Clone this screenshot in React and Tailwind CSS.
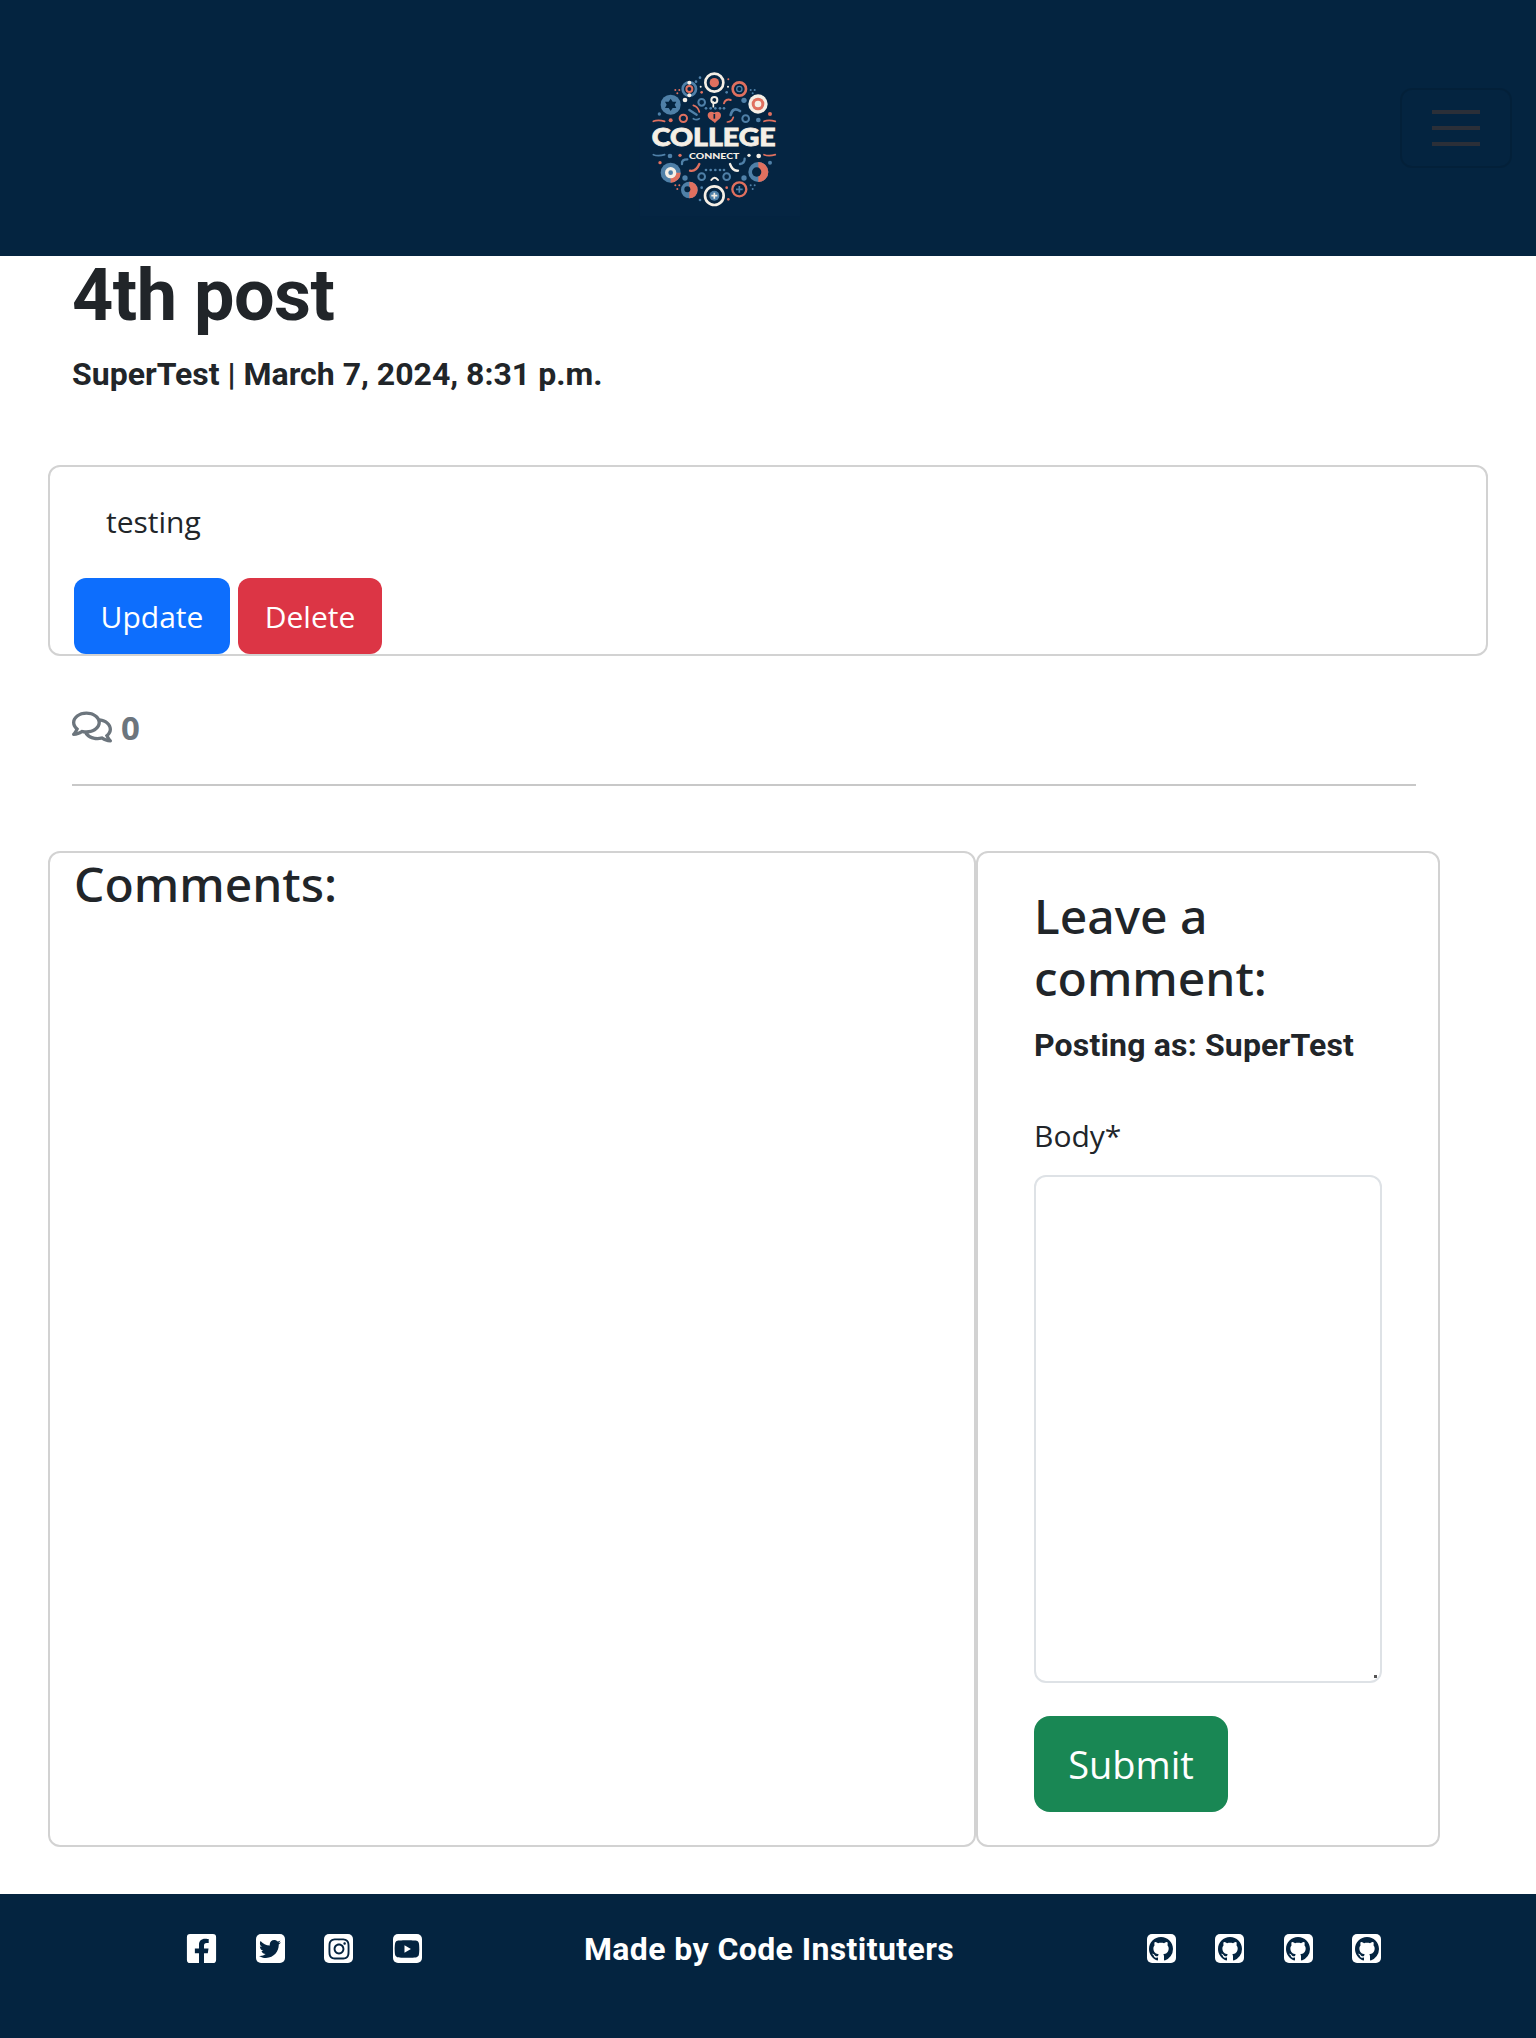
import { FaRegComments, FaFacebookSquare, FaTwitter, FaInstagram, FaYoutube } from 'react-icons/fa';

const GITHUB_PATH = 'M8 0C3.58 0 0 3.58 0 8c0 3.54 2.29 6.53 5.47 7.59.4.07.55-.17.55-.38 0-.19-.01-.82-.01-1.49-2.01.37-2.53-.49-2.69-.94-.09-.23-.48-.94-.82-1.13-.28-.15-.68-.52-.01-.53.63-.01 1.08.58 1.23.82.72 1.21 1.87.87 2.33.66.07-.52.28-.87.51-1.07-1.78-.2-3.64-.89-3.64-3.95 0-.87.31-1.59.82-2.15-.08-.2-.36-1.02.08-2.12 0 0 .67-.21 2.2.82.64-.18 1.32-.27 2-.27.68 0 1.36.09 2 .27 1.53-1.04 2.2-.82 2.2-.82.44 1.1.16 1.92.08 2.12.51.56.82 1.27.82 2.15 0 3.07-1.87 3.75-3.65 3.95.29.25.54.73.54 1.48 0 1.07-.01 1.93-.01 2.2 0 .21.15.46.55.38A8.013 8.013 0 0016 8c0-4.42-3.58-8-8-8z';

const headingFont = "font-['Roboto',sans-serif]";

const INK = '#f5efe6';
const BLUE = '#4f80a8';
const RED = '#e0705f';
const NAVY = '#042440';

// dots: [x, y, r, fill]
const LOGO_DOTS = [
  [268, 128, 6, INK], [268, 166, 6, INK], [255, 180, 7, INK], [432, 181, 8, BLUE], [305, 157, 4, RED], [380, 157, 4, BLUE],
  [300, 113, 4, BLUE], [288, 125, 4, BLUE], [385, 118, 3, RED], [302, 140, 3, INK], [384, 140, 3, INK],
  [226, 150, 3, RED], [238, 150, 3, RED], [232, 160, 3, RED], [452, 150, 3, BLUE], [464, 150, 3, BLUE], [458, 160, 3, BLUE],
  [212, 241, 6, RED], [475, 240, 7, BLUE], [178, 222, 5, BLUE], [510, 222, 6, RED],
  [318, 205, 4, BLUE], [332, 205, 4, BLUE], [346, 205, 4, BLUE], [360, 205, 4, BLUE], [372, 205, 4, BLUE],
  [210, 348, 7, BLUE], [240, 346, 5, RED], [447, 346, 5, INK], [476, 348, 7, INK], [180, 368, 5, RED], [510, 368, 6, BLUE],
  [318, 390, 4, BLUE], [332, 390, 4, BLUE], [346, 390, 4, BLUE], [360, 390, 4, BLUE], [372, 390, 4, BLUE],
  [255, 414, 8, BLUE], [432, 414, 8, BLUE], [226, 436, 3, RED], [238, 436, 3, RED], [232, 447, 3, RED],
  [452, 436, 3, BLUE], [464, 436, 3, BLUE], [458, 447, 3, BLUE], [305, 443, 4, BLUE], [380, 443, 4, RED], [385, 478, 4, RED], [300, 480, 4, BLUE],
];

// rings: [x, y, r, strokeWidth, stroke]
const LOGO_RINGS = [
  [343, 128, 27, 8, INK], [268, 147, 20, 8, BLUE], [268, 147, 9, 6, RED], [418, 147, 20, 8, RED], [418, 147, 8, 4, BLUE],
  [305, 187, 10, 6, BLUE], [343, 180, 9, 6, INK], [250, 235, 11, 6, RED], [437, 236, 10, 6, BLUE],
  [305, 410, 10, 6, BLUE], [380, 410, 10, 6, BLUE], [343, 467, 28, 8, INK], [418, 448, 21, 7, RED],
];

// arcs drawn as short thick strokes
const LOGO_ARCS = [
  ['M372 190a14 14 0 0 1 20 -10', 6, RED], ['M268 210l22 14', 7, BLUE], ['M280 196q14 4 18 20', 5, RED], ['M298 236q-8 6 -18 0', 5, BLUE],
  ['M392 225q6 -26 28 -12', 8, BLUE], ['M382 246q14 0 18 -14', 5, RED], ['M160 244q14 -6 34 0', 5, RED], ['M492 244q14 -6 34 0', 5, RED],
  ['M160 344q14 6 34 0', 5, BLUE], ['M492 344q14 6 34 0', 5, RED], ['M246 372q-2 -14 16 -14', 7, BLUE], ['M270 392q18 4 28 -20', 7, RED],
  ['M334 420q10 -14 20 0', 6, INK], ['M390 372q8 22 24 20', 7, INK], ['M420 372q14 -2 14 -16', 7, BLUE],
  ['M340 186v14', 5, INK],
];

function Logo() {
  return (
    <svg viewBox="0 0 720 570" className="h-[190px] w-[240px] shrink-0">
      <rect x="118" y="60" width="484" height="470" fill="#052542" />
      <circle cx="343" cy="128" r="14" fill={RED} />
      <circle cx="212" cy="194" r="30" fill={BLUE} />
      <path d="M212 176l6 9 11 0-5 9 5 10-11 0-6 9-6-9-11 0 5-10-5-9 11 0z" fill={NAVY} />
      <circle cx="474" cy="192" r="29" fill={INK} />
      <circle cx="474" cy="192" r="19" fill={RED} />
      <circle cx="474" cy="192" r="10" fill={INK} />
      <circle cx="212" cy="398" r="30" fill={BLUE} />
      <path d="M212 428a30 30 0 0 0 30 -30l-30 0z" fill={RED} />
      <circle cx="212" cy="398" r="17" fill={INK} />
      <circle cx="212" cy="398" r="7" fill={BLUE} />
      <circle cx="475" cy="396" r="30" fill={BLUE} />
      <path d="M475 366a30 30 0 0 1 0 60z" fill={RED} />
      <circle cx="470" cy="396" r="14" fill={NAVY} />
      <circle cx="268" cy="450" r="25" fill={BLUE} />
      <path d="M268 425a25 25 0 0 1 0 50z" fill={RED} />
      <circle cx="262" cy="448" r="9" fill={NAVY} />
      <circle cx="343" cy="467" r="15" fill={BLUE} />
      <path d="M343 458v18M334 467h18" stroke={INK} strokeWidth="5" />
      <path d="M418 438v20M408 448h20" stroke={BLUE} strokeWidth="5" />
      <path d="M345 250c-8-10-22-12-22-24 0-10 10-14 20-8 10-6 20-2 20 8 0 12-12 14-18 24z" fill={RED} />
      <path d="M343 222v14" stroke={NAVY} strokeWidth="5" />
      {LOGO_RINGS.map(([x, y, r, w, c], i) => (
        <circle key={i} cx={x} cy={y} r={r} fill="none" stroke={c} strokeWidth={w} />
      ))}
      {LOGO_DOTS.map(([x, y, r, c], i) => (
        <circle key={i} cx={x} cy={y} r={r} fill={c} />
      ))}
      {LOGO_ARCS.map(([d, w, c], i) => (
        <path key={i} d={d} fill="none" stroke={c} strokeWidth={w} strokeLinecap="round" />
      ))}
      <text x="155" y="318" textLength="372" lengthAdjust="spacingAndGlyphs" fontFamily="Lato, sans-serif" fontWeight="900" fontSize="74" stroke={INK} strokeWidth="2.5" fill={INK}>COLLEGE</text>
      <text x="267" y="357" textLength="151" lengthAdjust="spacingAndGlyphs" fontFamily="Lato, sans-serif" fontWeight="900" fontSize="25" fill={INK}>CONNECT</text>
    </svg>
  );
}

function SquareIcon({ children }) {
  return (
    <span className="flex h-[29px] w-[29px] items-center justify-center rounded-[5px] bg-white text-[#042440]">
      {children}
    </span>
  );
}

function GithubIcon() {
  return (
    <SquareIcon>
      <svg viewBox="0 0 16 16" className="h-[24px] w-[24px]" fill="#042440">
        <path d={GITHUB_PATH} />
      </svg>
    </SquareIcon>
  );
}

export default function App() {
  return (
    <div className="min-h-[2038px] bg-white font-['Open_Sans',sans-serif] text-[#212529]">
      <header className="flex h-[256px] items-start justify-between bg-[#042440] pl-[600px] pr-[24px] pt-[40px]">
        <Logo />
        <button className="mt-[48px] flex h-[80px] w-[112px] flex-col items-center justify-center gap-[12px] rounded-[12px] border-2 border-black/10">
          <span className="h-[4px] w-[48px] bg-[#2b2f38]" />
          <span className="h-[4px] w-[48px] bg-[#2b2f38]" />
          <span className="h-[4px] w-[48px] bg-[#2b2f38]" />
        </button>
      </header>

      <main className="h-[1638px] pl-[48px]">
        <div className="pl-[24px]">
          <h1 className={`${headingFont} text-[72px] leading-[80px] font-bold tracking-[-0.5px]`}>4th post</h1>
          <p className={`${headingFont} mt-[18px] text-[32px] leading-[40px] font-bold`}>
            SuperTest | March 7, 2024, 8:31 p.m.
          </p>
        </div>

        <section className="mt-[71px] h-[191px] w-[1440px] rounded-[12px] border-2 border-[#d2d2d2] px-[24px] pt-[31px]">
          <p className="pl-[32px] text-[30px] leading-[48px] font-normal">testing</p>
          <div className="mt-[32px] flex gap-[8px]">
            <button className="flex h-[76px] w-[156px] items-center justify-center rounded-[12px] bg-[#0d6efd] text-[30px] font-normal text-white">Update</button>
            <button className="flex h-[76px] w-[144px] items-center justify-center rounded-[12px] bg-[#dc3545] text-[30px] font-normal text-white">Delete</button>
          </div>
        </section>

        <div className="ml-[24px] mt-[47px] flex h-[48px] w-[1344px] items-center gap-[9px] text-[#6c757d]">
          <FaRegComments className="text-[40px]" />
          <strong className="text-[33px] leading-none font-bold">0</strong>
        </div>
        <hr className="ml-[24px] mt-[33px] w-[1344px] border-t-2 border-[#c8c8c8]" />

        <div className="mt-[65px] flex h-[996px]">
          <section className="h-full w-[928px] rounded-[12px] border-2 border-[#d2d2d2] px-[24px]">
            <h3 className="font-['Noto_Sans',sans-serif] text-[48px] leading-[62px] font-medium">Comments:</h3>
          </section>
          <section className="h-full w-[464px] rounded-[12px] border-2 border-[#d2d2d2] pl-[56px] pt-[32px]">
            <h3 className="w-[300px] font-['Noto_Sans',sans-serif] text-[48px] leading-[62px] font-medium">Leave a comment:</h3>
            <p className={`${headingFont} mt-[14px] text-[32px] leading-[44px] font-bold tracking-[0.17px]`}>Posting as: SuperTest</p>
            <label className="mt-[45px] block text-[30px] leading-[48px] font-normal">Body*</label>
            <div className="relative mt-[15px] h-[508px] w-[348px]">
              <textarea className="block h-full w-full resize-none rounded-[12px] border-2 border-[#dee2e6] outline-none" />
              <span className="absolute bottom-[5px] right-[5px] h-[3px] w-[3px] bg-[#555]" />
            </div>
            <button className="mt-[33px] flex h-[96px] w-[194px] items-center justify-center rounded-[16px] bg-[#198754] text-[38px] font-normal text-white">Submit</button>
          </section>
        </div>
      </main>

      <footer className="flex h-[144px] items-start justify-between bg-[#042440] pl-[187px] pr-[155px] pt-[40px]">
        <div className="flex gap-[39.5px]">
          <FaFacebookSquare className="h-[29px] w-[29px] scale-[1.15] text-white" />
          <SquareIcon><FaTwitter className="text-[22px]" /></SquareIcon>
          <SquareIcon><FaInstagram className="text-[24px]" /></SquareIcon>
          <SquareIcon><FaYoutube className="text-[26px]" /></SquareIcon>
        </div>
        <p className={`${headingFont} mr-[30px] text-[32px] leading-[30px] font-bold tracking-[0.4px] text-white`}>Made by Code Instituters</p>
        <div className="flex gap-[39.5px]">
          <GithubIcon />
          <GithubIcon />
          <GithubIcon />
          <GithubIcon />
        </div>
      </footer>
    </div>
  );
}
